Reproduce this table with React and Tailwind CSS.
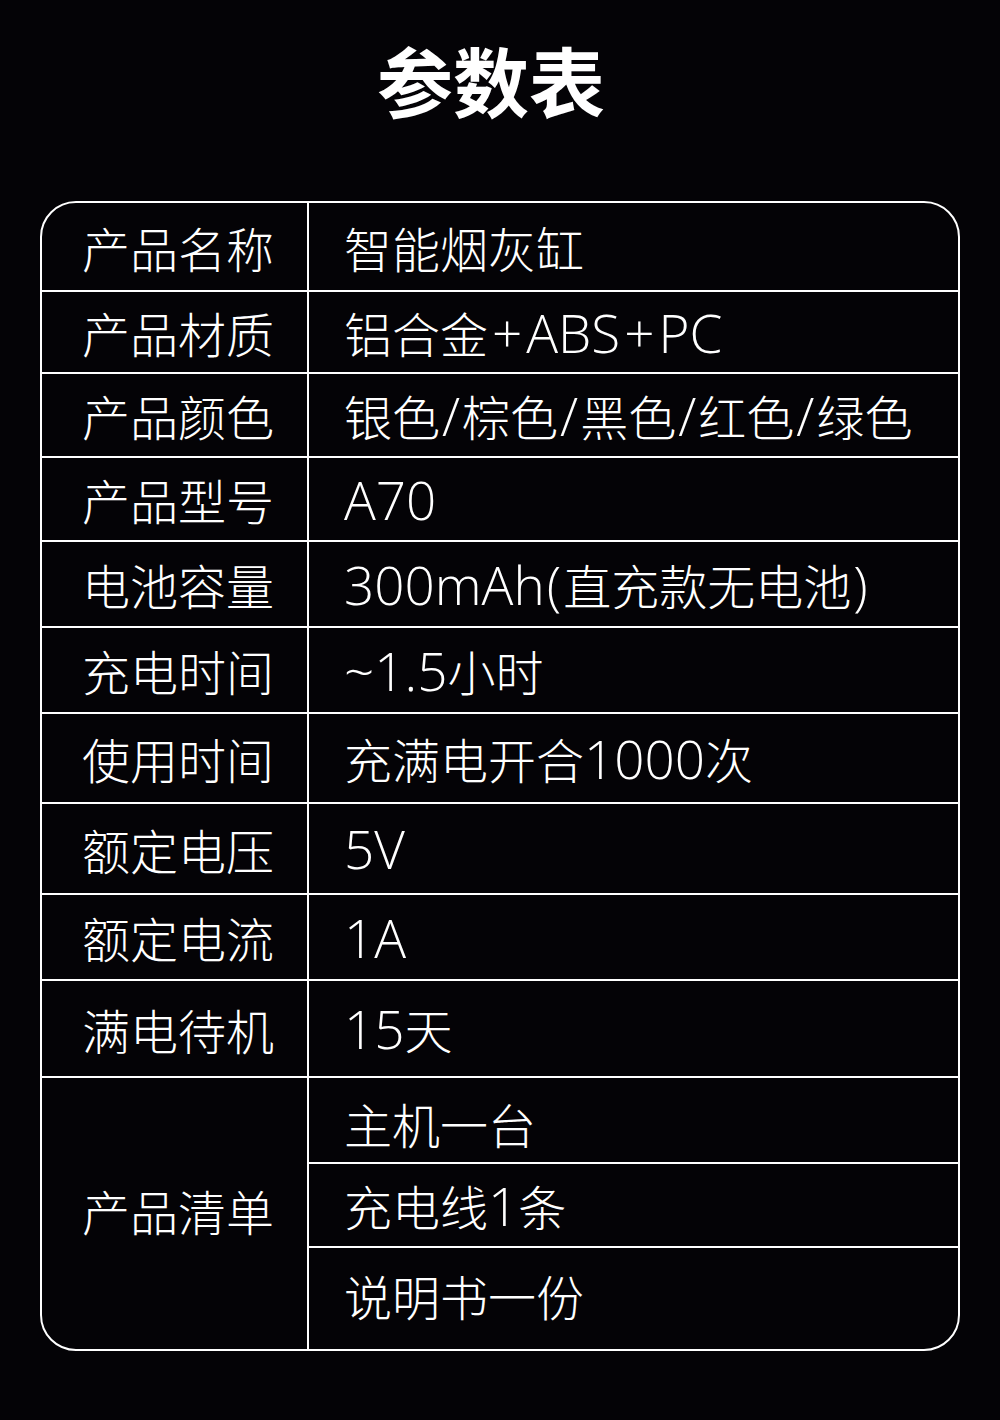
import React from "react";

const rows = [
  { label: "产品名称", value: "智能烟灰缸", h: "h-[89px]" },
  { label: "产品材质", value: "铝合金+ABS+PC", h: "h-[82px]" },
  { label: "产品颜色", value: "银色/棕色/黑色/红色/绿色", h: "h-[84px]" },
  { label: "产品型号", value: "A70", h: "h-[84px]" },
  { label: "电池容量", value: "300mAh(直充款无电池)", h: "h-[86px]" },
  { label: "充电时间", value: "~1.5小时", h: "h-[86px]" },
  { label: "使用时间", value: "充满电开合1000次", h: "h-[90px]" },
  { label: "额定电压", value: "5V", h: "h-[91px]" },
  { label: "额定电流", value: "1A", h: "h-[86px]" },
  { label: "满电待机", value: "15天", h: "h-[97px]" },
];

const font = { fontFamily: '"Noto Sans CJK SC", "Noto Sans", sans-serif' };
const latin = { fontFamily: '"Open Sans", "Noto Sans", sans-serif' };

function Mixed({ text }) {
  const parts = text.split(/([A-Za-z0-9~.+()/]+)/).filter(Boolean);
  return (
    <span>
      {parts.map((p, i) =>
        /^[A-Za-z0-9~.+()/]+$/.test(p) ? (
          <span key={i} style={latin} className="text-[53px] font-light">
            {p.split(/([+/()])/).filter(Boolean).map((q, j) =>
              q === "+" ? (
                <span key={j} className="mx-[4px]">+</span>
              ) : q === "/" ? (
                <span key={j} className="mx-[2px]">/</span>
              ) : q === "(" || q === ")" ? (
                <span key={j} className="mx-[2px]">{q}</span>
              ) : (
                <span key={j}>{q}</span>
              )
            )}
          </span>
        ) : (
          <span key={i}>{p}</span>
        )
      )}
    </span>
  );
}

export default function App() {
  return (
    <div className="w-[1000px] h-[1420px] bg-[#040306] text-white" style={font}>
      <div className="h-[201px] flex justify-center pt-[35px] pr-[18px]">
        <h1 className="text-[76px] leading-[88px] font-bold">参数表</h1>
      </div>
      <div className="ml-[40px] w-[920px] border-2 border-white rounded-[36px] overflow-hidden flex flex-col">
        {rows.map((r) => (
          <div key={r.label} className={`flex border-b-2 border-white ${r.h}`}>
            <div className="w-[267px] shrink-0 border-r-2 border-white flex items-center pl-[40px] text-[48px] leading-none font-light">
              {r.label}
            </div>
            <div className="flex-1 flex items-center pl-[35px] text-[48px] leading-none font-light">
              <Mixed text={r.value} />
            </div>
          </div>
        ))}
        <div className="flex h-[271px]">
          <div className="w-[267px] shrink-0 border-r-2 border-white flex items-center pl-[40px] pb-[8px] text-[48px] leading-none font-light">
            产品清单
          </div>
          <div className="flex-1 flex flex-col">
            <div className="h-[86px] border-b-2 border-white flex items-center pl-[35px] text-[48px] leading-none font-light pt-[6px]">
              主机一台
            </div>
            <div className="h-[84px] border-b-2 border-white flex items-center pl-[35px] text-[48px] leading-none font-light">
              <Mixed text="充电线1条" />
            </div>
            <div className="h-[101px] flex items-center pl-[35px] pb-[8px] text-[48px] leading-none font-light">
              说明书一份
            </div>
          </div>
        </div>
      </div>
    </div>
  );
}
